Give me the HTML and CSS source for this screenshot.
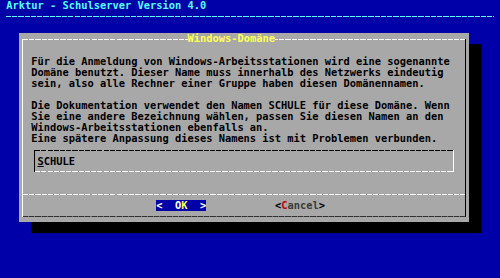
FILE: index.html
```html
<!DOCTYPE html>
<html lang="de">
<head>
<meta charset="utf-8">
<title>Arktur - Schulserver Version 4.0</title>
<link rel="stylesheet" href="styles.css">
</head>
<body>
<div class="screen-title">Arktur - Schulserver Version 4.0</div>
<div class="screen-rule"></div>
<div class="dialog">
  <div class="frame">
    <div class="frame-head"><span class="dlg-title">Windows-Domäne</span></div>
    <div class="text">
      <div class="line">Für die Anmeldung von Windows-Arbeitsstationen wird eine sogenannte</div>
      <div class="line">Domäne benutzt. Dieser Name muss innerhalb des Netzwerks eindeutig</div>
      <div class="line">sein, also alle Rechner einer Gruppe haben diesen Domänennamen.</div>
      <div class="line"> </div>
      <div class="line">Die Dokumentation verwendet den Namen SCHULE für diese Domäne. Wenn</div>
      <div class="line">Sie eine andere Bezeichnung wählen, passen Sie diesen Namen an den</div>
      <div class="line">Windows-Arbeitsstationen ebenfalls an.</div>
      <div class="line">Eine spätere Anpassung dieses Namens ist mit Problemen verbunden.</div>
    </div>
    <div class="input"><span class="cursor">S</span>CHULE</div>
    <div class="separator"></div>
    <div class="buttons">
      <span class="btn btn-ok">&lt;  O<span class="hot">K</span>  &gt;</span>
      <span class="btn btn-cancel">&lt;<span class="hot-red">C</span><span class="label">ancel</span>&gt;</span>
    </div>
  </div>
</div>
</body>
</html>
```
FILE: styles.css
```css
:root {
  --cw: 6.25px;
  --rh: 11.12px;
  --blue: #0000a8;
  --gray: #a8a8a8;
}
html, body {
  margin: 0;
  background: var(--blue);
}
body {
  width: 500px;
  height: 278px;
  overflow: hidden;
  font-family: "DejaVu Sans Mono", "Liberation Mono", monospace;
  font-weight: bold;
  font-size: 10.38px;
  line-height: var(--rh);
}
.screen-title {
  height: var(--rh);
  padding-left: var(--cw);
  color: #55ffff;
  white-space: pre;
}
.screen-rule {
  height: var(--rh);
  margin-left: var(--cw);
  width: calc(78 * var(--cw));
  background: repeating-linear-gradient(90deg, #55ffff 0 5px, transparent 5px 6.25px) 0 50% / 100% 1px no-repeat;
}
.dialog {
  margin: var(--rh) 0 0 calc(3 * var(--cw));
  width: calc(72 * var(--cw));
  height: calc(17 * var(--rh));
  box-sizing: border-box;
  padding: calc(var(--rh) / 2) calc(var(--cw) / 2);
  background: var(--gray);
  box-shadow: calc(2 * var(--cw)) var(--rh) 0 0 #000;
  display: flex;
}
.frame {
  flex: 1;
  border-left: 1px solid #fff;
  border-right: 1px solid #000;
  padding-left: calc(1.5 * var(--cw) - 1px);
  background:
    repeating-linear-gradient(90deg, #fff 0 5px, transparent 5px 6.25px) 0 0 / 100% 1px no-repeat,
    repeating-linear-gradient(90deg, #303030 0 5px, #707070 5px 6.25px) 0 100% / 100% 1px no-repeat;
}
.frame-head {
  height: var(--rh);
  margin-top: calc(var(--rh) / -2);
  padding-left: calc(25 * var(--cw));
  display: flex;
}
.dlg-title {
  background: var(--gray);
  color: #ffff55;
  white-space: pre;
}
.text {
  margin-top: var(--rh);
  color: #000;
}
.line {
  height: var(--rh);
  white-space: pre;
}
.input {
  margin: calc(var(--rh) / 2) 0 calc(1.5 * var(--rh)) calc(var(--cw) / 2);
  width: calc(67 * var(--cw) + 1px);
  height: calc(2 * var(--rh));
  box-sizing: border-box;
  padding: calc(var(--rh) / 2) 0 0 calc(var(--cw) / 2 - 1px);
  border-left: 1px solid #000;
  border-right: 1px solid #fff;
  background:
    repeating-linear-gradient(90deg, #000 0 5px, transparent 5px 6.25px) 0 0 / 100% 1px no-repeat,
    repeating-linear-gradient(90deg, #fff 0 5px, transparent 5px 6.25px) 0 100% / 100% 1px no-repeat;
  color: #000;
  white-space: pre;
}
.cursor {
  text-decoration: underline;
}
.separator {
  height: var(--rh);
  margin-left: calc(1px - 1.5 * var(--cw));
  background: repeating-linear-gradient(90deg, #fff 0 5px, transparent 5px 6.25px) 0 50% / 100% 1px no-repeat;
}
.buttons {
  height: var(--rh);
  display: flex;
  padding-left: calc(20 * var(--cw));
  gap: calc(11 * var(--cw));
}
.btn {
  white-space: pre;
}
.btn-ok {
  background: var(--blue);
  color: #fff;
}
.hot {
  color: #ffff55;
}
.btn-cancel {
  color: #000;
}
.hot-red {
  color: #c80000;
}
.label {
  color: #3a3a3a;
}
```
